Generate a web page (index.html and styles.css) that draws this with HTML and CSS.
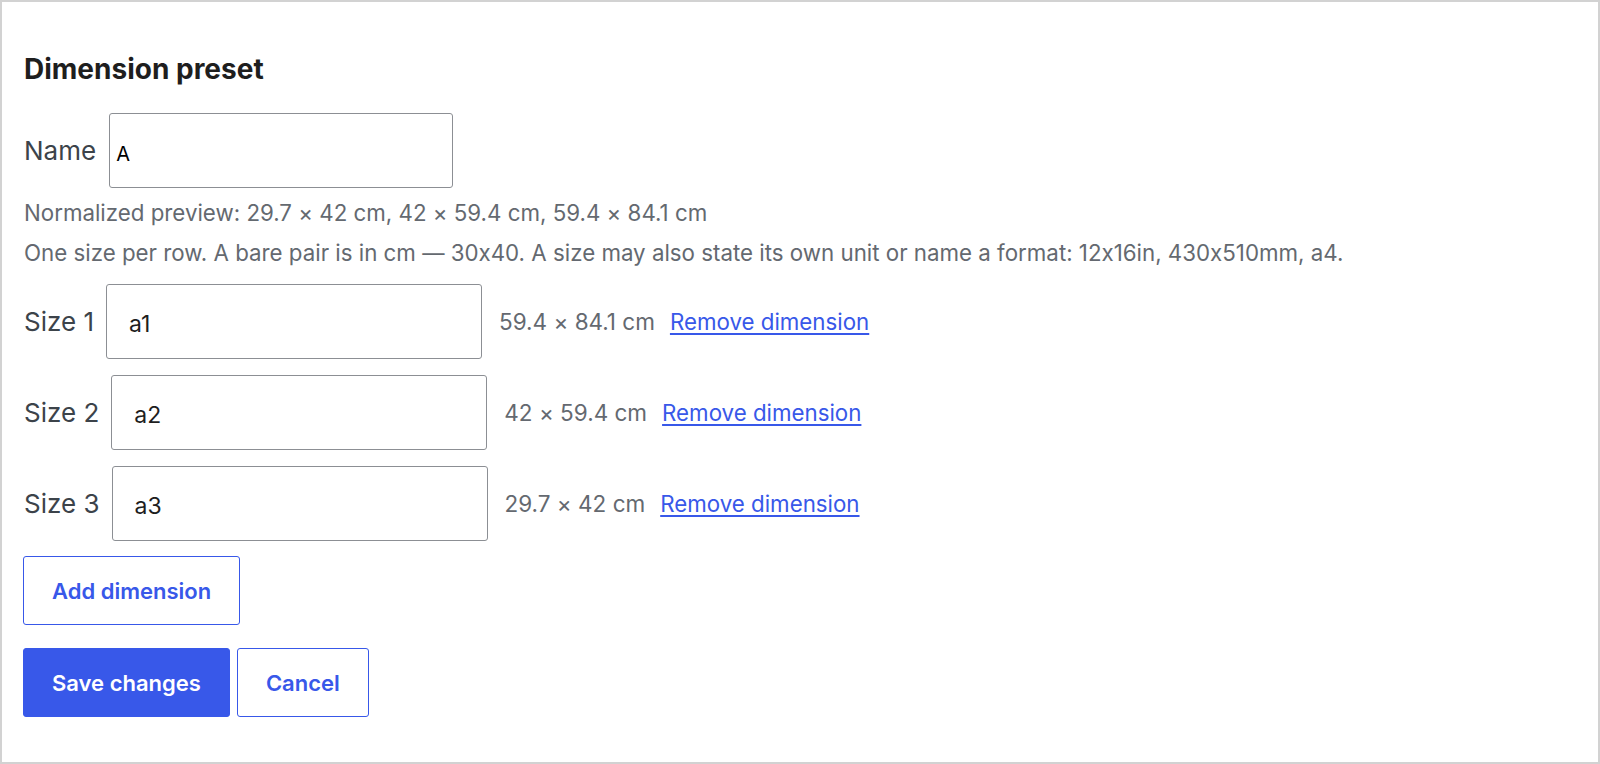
FILE: index.html
```html
<!DOCTYPE html>
<html lang="en">
  <head>
    <meta charset="UTF-8" />
    <meta name="viewport" content="width=device-width, initial-scale=1.0" />
    <title>Dimension preset</title>
    <link rel="stylesheet" href="styles.css">
  </head>
  <body>
    <form class="panel" onsubmit="return false">
      <h2 class="panel-title">Dimension preset</h2>

      <div class="field-row">
        <label class="field-label" for="presetName">Name</label>
        <input class="name-input" id="presetName" type="text" value="A" />
      </div>

      <p class="hint">Normalized preview: 29.7 × 42 cm, 42 × 59.4 cm, 59.4 × 84.1 cm</p>
      <p class="hint">One size per row. A bare pair is in cm — 30x40. A size may also state its own unit or name a format: 12x16in, 430x510mm, a4.</p>

      <div class="size-list">
        <div class="size-row">
          <label class="field-label" for="size1">Size 1</label>
          <input class="size-input" id="size1" type="text" value="a1" />
          <span class="size-preview">59.4 × 84.1 cm</span>
          <a href="#" class="remove-link">Remove dimension</a>
        </div>
        <div class="size-row">
          <label class="field-label" for="size2">Size 2</label>
          <input class="size-input" id="size2" type="text" value="a2" />
          <span class="size-preview">42 × 59.4 cm</span>
          <a href="#" class="remove-link">Remove dimension</a>
        </div>
        <div class="size-row">
          <label class="field-label" for="size3">Size 3</label>
          <input class="size-input" id="size3" type="text" value="a3" />
          <span class="size-preview">29.7 × 42 cm</span>
          <a href="#" class="remove-link">Remove dimension</a>
        </div>
      </div>

      <div class="add-row">
        <button type="button" class="btn btn-outline">Add dimension</button>
      </div>

      <div class="actions">
        <button type="submit" class="btn btn-primary">Save changes</button>
        <button type="button" class="btn btn-outline">Cancel</button>
      </div>
    </form>
  </body>
</html>
```

FILE: styles.css
```css
:root {
  --primary-color: #3858e9;
  --text-color: #1e1e1e;
  --label-color: #3c434a;
  --muted-color: #646970;
  --input-border: #8c8f94;
  --frame-border: #d2d2d2;
}

* {
  box-sizing: border-box;
}

body {
  margin: 0;
  font-family: Inter, "Noto Sans", sans-serif;
  font-feature-settings: "calt" 0;
  color: var(--text-color);
  background: #ffffff;
}

.panel {
  width: 1600px;
  height: 764px;
  border: 2px solid var(--frame-border);
  padding: 50px 22px 0 21px;
}

.panel-title {
  margin: 0 0 27px 1px;
  font-size: 28px;
  line-height: 34px;
  font-weight: 700;
  color: var(--text-color);
}

.field-row {
  display: flex;
  align-items: center;
  padding-left: 1px;
}

.field-label {
  font-size: 26px;
  color: var(--label-color);
}

.name-input {
  width: 344px;
  height: 75px;
  margin-left: 13px;
  padding: 6px 6px 0;
  border: 1px solid var(--input-border);
  border-radius: 3px;
  font-family: inherit;
  font-feature-settings: "calt" 0;
  font-size: 20px;
  color: #000;
}

.hint {
  margin: 10px 0 0 1px;
  font-size: 22.3px;
  line-height: 30px;
  color: var(--muted-color);
}

.size-list {
  display: flex;
  flex-direction: column;
  gap: 16px;
  margin-top: 16px;
  padding-left: 1px;
}

.size-row {
  display: flex;
  align-items: center;
}

.size-input {
  width: 376px;
  height: 75px;
  margin-left: 12px;
  padding: 4px 22px 0;
  border: 1px solid var(--input-border);
  border-radius: 3px;
  font-family: inherit;
  font-feature-settings: "calt" 0;
  font-size: 23px;
  color: var(--text-color);
}

.size-preview {
  margin-left: 17px;
  font-size: 22.5px;
  color: var(--muted-color);
}

.remove-link {
  margin-left: 15px;
  font-size: 22.3px;
  color: var(--primary-color);
  text-decoration: underline;
  text-underline-offset: 3px;
}

.add-row {
  margin-top: 15px;
}

.actions {
  display: flex;
  gap: 7px;
  margin-top: 23px;
}

.btn {
  height: 69px;
  padding: 0 28px;
  border-radius: 3px;
  font-family: inherit;
  font-size: 22px;
  font-weight: 600;
  cursor: pointer;
}

.btn-outline {
  background: #ffffff;
  color: var(--primary-color);
  border: 1.5px solid var(--primary-color);
}

.btn-primary {
  background: var(--primary-color);
  color: #ffffff;
  border: 1.5px solid var(--primary-color);
}
```
